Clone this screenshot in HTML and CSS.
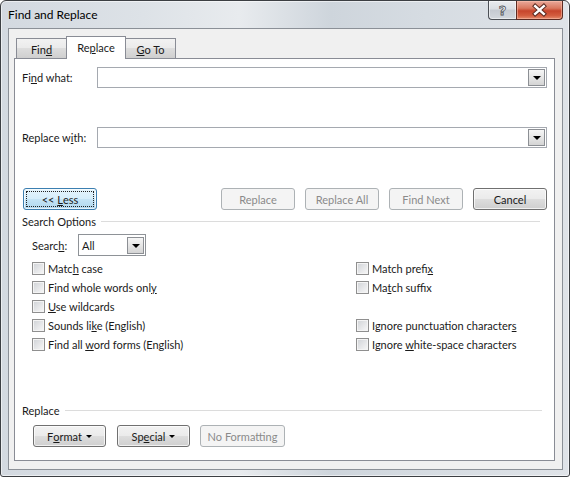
FILE: index.html
```html
<!DOCTYPE html>
<html>
<head>
<meta charset="utf-8">
<title>Find and Replace</title>
<link rel="stylesheet" href="styles.css">
</head>
<body>
<div class="window">
  <div class="titlebar">
    <span class="title">Find and Replace</span>
    <div class="caption">
      <div class="cb help"><span class="q">?</span></div>
      <div class="cb close">
        <svg width="47" height="19" viewBox="0 0 47 19">
          <path d="M19 5 L28 13 M28 5 L19 13" stroke="#5a2a20" stroke-width="4.6" stroke-linecap="square" fill="none"/>
          <path d="M19 5 L28 13 M28 5 L19 13" stroke="#ffffff" stroke-width="2.6" stroke-linecap="square" fill="none"/>
        </svg>
      </div>
    </div>
  </div>
  <div class="client">
    <div class="tabs">
      <div class="tab t-find">Fin<u>d</u></div>
      <div class="tab t-replace selected">Re<u>p</u>lace</div>
      <div class="tab t-goto"><u>G</u>o To</div>
    </div>
    <div class="panel">
      <div class="field first">
        <span class="flabel">Fi<u>n</u>d what:</span>
        <div class="combo"><span class="drop"><span class="tri"></span></span></div>
      </div>
      <div class="field second">
        <span class="flabel">Replace w<u>i</u>th:</span>
        <div class="combo"><span class="drop"><span class="tri"></span></span></div>
      </div>
      <div class="btnrow">
        <div class="btn focus"><span class="focusrect">&lt;&lt;&nbsp;<u>L</u>ess</span></div>
        <div class="btngroup">
          <div class="btn disabled">Replace</div>
          <div class="btn disabled">Replace All</div>
          <div class="btn disabled">Find Next</div>
          <div class="btn">Cancel</div>
        </div>
      </div>
      <div class="ghead gh-search"><span>Search Options</span><span class="rule"></span></div>
      <div class="searchrow">
        <span class="slabel">Searc<u>h</u>:</span>
        <div class="select"><span class="seltext">All</span><span class="drop"><span class="tri"></span></span></div>
      </div>
      <div class="opts">
        <div class="col left">
          <div class="opt"><span class="chk"></span><span>Matc<u>h</u> case</span></div>
          <div class="opt"><span class="chk"></span><span>Find whole words onl<u>y</u></span></div>
          <div class="opt"><span class="chk"></span><span><u>U</u>se wildcards</span></div>
          <div class="opt"><span class="chk"></span><span>Sounds li<u>k</u>e (English)</span></div>
          <div class="opt"><span class="chk"></span><span>Find all <u>w</u>ord forms (English)</span></div>
        </div>
        <div class="col right">
          <div class="opt"><span class="chk"></span><span>Match prefi<u>x</u></span></div>
          <div class="opt"><span class="chk"></span><span>Ma<u>t</u>ch suffix</span></div>
          <div class="opt empty"></div>
          <div class="opt"><span class="chk"></span><span>Ignore punctuation character<u>s</u></span></div>
          <div class="opt"><span class="chk"></span><span>Ignore <u>w</u>hite-space characters</span></div>
        </div>
      </div>
      <div class="ghead gh-replace"><span>Replace</span><span class="rule"></span></div>
      <div class="fmtrow">
        <div class="btn fmt w73">F<u>o</u>rmat <span class="dd"></span></div>
        <div class="btn fmt w73 sp">Sp<u>e</u>cial <span class="dd"></span></div>
        <div class="btn disabled w85">No Formatting</div>
      </div>
    </div>
  </div>
</div>
</body>
</html>
```
FILE: styles.css
```css
html, body {
  margin: 0;
  padding: 0;
  background: #ffffff;
}

.window {
  width: 570px;
  height: 477px;
  box-sizing: border-box;
  border: 1px solid #3c3f43;
  border-radius: 6px 6px 3px 3px;
  background: linear-gradient(90deg, #d3d9e0 0%, #dde2e7 25%, #e8ebee 42%, #ced5dc 58%, #d6dce2 75%, #dfe3e8 100%);
  box-shadow: inset 0 0 0 1px rgba(255,255,255,0.55);
  overflow: hidden;
  font-family: "Lato", "Liberation Sans", sans-serif;
  font-size: 11px;
  color: #1a1a1a;
}

.titlebar {
  height: 27px;
  display: flex;
  justify-content: space-between;
  align-items: flex-start;
}

.title {
  padding: 6px 0 0 7px;
  font-size: 12px;
  line-height: 15px;
  color: #000;
}

.caption {
  display: flex;
  margin-right: 6px;
}

.cb {
  height: 19px;
  box-sizing: border-box;
  border: 1px solid #4b4f55;
  border-top: none;
  display: flex;
  align-items: center;
  justify-content: center;
}

.help {
  width: 28px;
  border-right: none;
  border-radius: 0 0 0 4px;
  background: linear-gradient(#e9ebee 0%, #dadee3 45%, #c5cad1 50%, #d2d7dd 100%);
  box-shadow: inset 0 0 0 1px rgba(255,255,255,0.5);
}

.q {
  font-family: "DejaVu Sans", sans-serif;
  font-weight: bold;
  font-size: 13px;
  line-height: 13px;
  color: #f4f4f4;
  -webkit-text-stroke: 0.8px #50545a;
}

.close {
  width: 47px;
  border-radius: 0 0 4px 0;
  background: linear-gradient(#e9a99b 0%, #d9785f 40%, #c7452c 55%, #d35c3e 80%, #e48a6c 100%);
  box-shadow: inset 0 0 0 1px rgba(255,200,180,0.5);
  border-color: #5c2b22;
}

.close svg {
  display: block;
}

.client {
  margin-left: 7px;
  width: 555px;
  height: 442px;
  box-sizing: border-box;
  border: 1px solid #8b9097;
  background: #f0f0f0;
}

.tabs {
  display: flex;
  align-items: flex-end;
  height: 22px;
  margin-top: 7px;
  padding-left: 7px;
}

.tab {
  box-sizing: border-box;
  height: 20px;
  border: 1px solid #898c95;
  border-bottom: none;
  background: linear-gradient(#f2f2f2 0%, #ebebeb 45%, #dddddd 50%, #cfcfcf 100%);
  display: flex;
  align-items: center;
  justify-content: center;
  padding-top: 1px;
}

.t-find { width: 50px; border-right: none; }
.t-replace { width: 60px; }
.t-goto { width: 50px; border-left: none; }

.tab.selected {
  height: 23px;
  margin-bottom: -1px;
  background: #ffffff;
  position: relative;
  z-index: 1;
  padding-top: 0;
  padding-bottom: 2px;
}

.panel {
  margin-left: 5px;
  width: 541px;
  height: 403px;
  box-sizing: border-box;
  border: 1px solid #898c95;
  background: #ffffff;
  padding-left: 7px;
  padding-right: 7px;
}

.field {
  display: flex;
  align-items: center;
  height: 21px;
}

.field.first { margin-top: 8px; }
.field.second { margin-top: 39px; }

.flabel {
  width: 75px;
  flex: none;
}

.combo {
  flex: 1;
  height: 21px;
  box-sizing: border-box;
  border: 1px solid #a5a9b0;
  background: #ffffff;
  display: flex;
  justify-content: flex-end;
  align-items: center;
  padding-right: 1px;
}

.drop {
  width: 17px;
  height: 17px;
  box-sizing: border-box;
  border: 1px solid #8c8f94;
  background: linear-gradient(#f6f6f6 0%, #e6e6e6 50%, #d4d4d4 100%);
  display: flex;
  align-items: center;
  justify-content: center;
}

.tri {
  width: 0;
  height: 0;
  border-left: 4px solid transparent;
  border-right: 4px solid transparent;
  border-top: 4px solid #000;
  margin-top: 1px;
}

.btnrow {
  display: flex;
  justify-content: space-between;
  margin-top: 40px;
}

.btngroup {
  display: flex;
  gap: 10px;
}

.btn {
  width: 74px;
  height: 22px;
  box-sizing: border-box;
  border: 1px solid #707070;
  border-radius: 3px;
  background: linear-gradient(#f2f2f2 0%, #ebebeb 48%, #dddddd 52%, #cfcfcf 100%);
  box-shadow: inset 0 0 0 1px rgba(255,255,255,0.7);
  display: flex;
  align-items: center;
  justify-content: center;
  white-space: nowrap;
}

.btn.focus {
  margin-left: 1px;
  border-color: #3c7fb1;
  background: linear-gradient(#e5f4fc 0%, #d6eefb 48%, #c4e4f6 52%, #b1d7ee 100%);
  padding: 2px;
}

.focusrect {
  flex: 1;
  align-self: stretch;
  display: flex;
  align-items: center;
  justify-content: center;
  outline: 1px dotted #222;
  outline-offset: -1px;
}

.btn.disabled {
  border-color: #adb2b5;
  background: #f4f4f4;
  box-shadow: none;
  color: #8a8a8a;
}

.ghead {
  display: flex;
  align-items: center;
  height: 14px;
  padding-right: 7px;
}

.gh-search { margin-top: 4px; }
.gh-replace { margin-top: 49px; padding-right: 5px; }

.rule {
  flex: 1;
  height: 1px;
  background: #dcdcdc;
  margin-left: 5px;
}

.searchrow {
  display: flex;
  align-items: center;
  margin-top: 6px;
  padding-left: 10px;
  height: 22px;
}

.slabel {
  width: 46px;
  flex: none;
}

.select {
  width: 68px;
  height: 22px;
  box-sizing: border-box;
  border: 1px solid #8e9297;
  background: #fff;
  display: flex;
  align-items: center;
  justify-content: space-between;
  padding-left: 3px;
  padding-right: 1px;
}

.opts {
  display: flex;
  margin-top: 3px;
  padding-left: 10px;
}

.col.left { width: 324px; }

.opt {
  height: 19px;
  display: flex;
  align-items: center;
}

.opt > span:last-child {
  margin-top: -1px;
}

.chk {
  width: 13px;
  height: 13px;
  box-sizing: border-box;
  border: 1px solid #8f8f8f;
  background: linear-gradient(135deg, #cfd2d6 0%, #e6e7e9 55%, #f8f8f8 100%);
  box-shadow: inset 0 0 0 1px #f4f4f4;
  margin-right: 3px;
  flex: none;
}

.fmtrow {
  display: flex;
  margin-top: 8px;
  padding-left: 11px;
}

.w73 { width: 73px; }
.w85 { width: 85px; margin-left: 10px; }
.sp { margin-left: 11px; }

.dd {
  display: inline-block;
  width: 0;
  height: 0;
  border-left: 3px solid transparent;
  border-right: 3px solid transparent;
  border-top: 3px solid #000;
  margin-left: 4px;
  vertical-align: middle;
}
```
